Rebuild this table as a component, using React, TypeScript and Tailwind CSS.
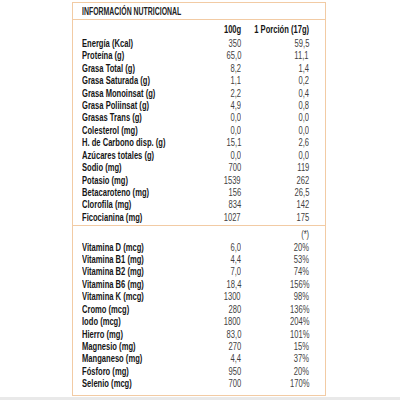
const main: [string, string, string][] = [
  ["Energía (Kcal)", "350", "59,5"],
  ["Proteína (g)", "65,0", "11,1"],
  ["Grasa Total (g)", "8,2", "1,4"],
  ["Grasa Saturada (g)", "1,1", "0,2"],
  ["Grasa Monoinsat (g)", "2,2", "0,4"],
  ["Grasa Poliinsat (g)", "4,9", "0,8"],
  ["Grasas Trans (g)", "0,0", "0,0"],
  ["Colesterol (mg)", "0,0", "0,0"],
  ["H. de Carbono disp. (g)", "15,1", "2,6"],
  ["Azúcares totales (g)", "0,0", "0,0"],
  ["Sodio (mg)", "700", "119"],
  ["Potasio (mg)", "1539", "262"],
  ["Betacaroteno (mg)", "156", "26,5"],
  ["Clorofila (mg)", "834", "142"],
  ["Ficocianina (mg)", "1027", "175"],
];

const minerals: [string, string, string][] = [
  ["Vitamina D (mcg)", "6,0", "20%"],
  ["Vitamina B1 (mg)", "4,4", "53%"],
  ["Vitamina B2 (mg)", "7,0", "74%"],
  ["Vitamina B6 (mg)", "18,4", "156%"],
  ["Vitamina K (mcg)", "1300", "98%"],
  ["Cromo (mcg)", "280", "136%"],
  ["Iodo (mcg)", "1800", "204%"],
  ["Hierro (mg)", "83,0", "101%"],
  ["Magnesio (mg)", "270", "15%"],
  ["Manganeso (mg)", "4,4", "37%"],
  ["Fósforo (mg)", "950", "20%"],
  ["Selenio (mcg)", "700", "170%"],
];

// condensed look: Arial-width text squeezed horizontally
function L({ children }: { children: React.ReactNode }) {
  return <span className="inline-block origin-left scale-x-[0.66] whitespace-nowrap">{children}</span>;
}

function R({ children }: { children: React.ReactNode }) {
  return <span className="inline-block origin-right scale-x-[0.66] whitespace-nowrap">{children}</span>;
}

function Row({ label, a, b }: { label: string; a: string; b: string }) {
  return (
    <div className="flex h-[12.43px] shrink-0 items-center">
      <div className="min-w-0 flex-1 font-bold text-[#161616]">
        <L>{label}</L>
      </div>
      <div className="flex w-[60px] shrink-0 justify-end text-[#3f3f3f]">
        <R>{a}</R>
      </div>
      <div className="flex w-[68px] shrink-0 justify-end text-[#3f3f3f]">
        <R>{b}</R>
      </div>
    </div>
  );
}

export default function App() {
  return (
    <div
      className="relative h-[400px] w-[400px] overflow-hidden bg-white pl-[72px] pt-[2px] text-[11.5px] leading-none"
      style={{ fontFamily: '"Liberation Sans", Arial, sans-serif' }}
    >
      <div className="flex h-[394px] w-[254px] flex-col border border-[#f2cba4] bg-white">
        <div className="flex h-[17px] shrink-0 items-center border-b border-[#f2cba4] pl-[9px] text-[10.5px] font-bold text-[#222]">
          <L>INFORMACIÓN NUTRICIONAL</L>
        </div>
        <div className="flex shrink-0 flex-col pl-[9px] pr-[16px] pt-[4px]">
          <div className="flex h-[12.43px] items-center font-bold text-[#161616]">
            <div className="min-w-0 flex-1" />
            <div className="flex w-[60px] shrink-0 justify-end">
              <R>100g</R>
            </div>
            <div className="flex w-[68px] shrink-0 justify-end">
              <R>1 Porción (17g)</R>
            </div>
          </div>
          <div className="h-[1px]" />
          {main.map(([l, a, b], i) => (
            <Row key={i} label={l} a={a} b={b} />
          ))}
        </div>
        <div className="mt-[1px] shrink-0 border-t border-[#f2cba4]" />
        <div className="flex shrink-0 flex-col pl-[9px] pr-[16px] pt-[3px]">
          <div className="flex h-[12.43px] items-center justify-end text-[#3f3f3f]">
            <R>(*)</R>
          </div>
          {minerals.map(([l, a, b], i) => (
            <Row key={i} label={l} a={a} b={b} />
          ))}
        </div>
      </div>
      <div className="absolute bottom-0 left-0 h-[3px] w-full bg-[#e9e9e9]" />
    </div>
  );
}
